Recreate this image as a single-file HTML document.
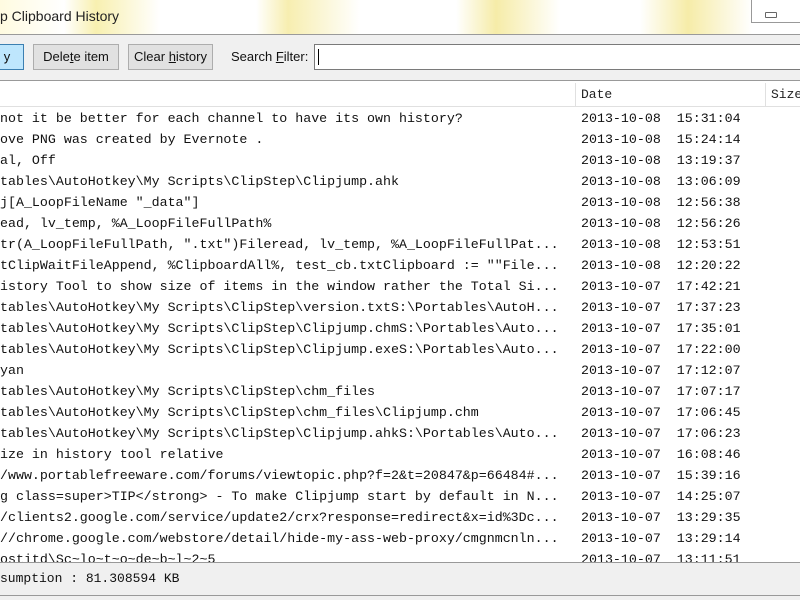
<!DOCTYPE html>
<html><head><style>
body{margin:0;width:800px;height:600px;overflow:hidden;background:#f0f0f0;font-family:"Liberation Sans",sans-serif;position:relative}
.title{position:absolute;left:0;top:0;width:800px;height:34px;background:linear-gradient(90deg,#fffbe0 0,#fff 8%,#f8f0b0 12%,#fff 20%,#fff 32%,#f7eeb0 36%,#fff 45%,#fff 57%,#f6eca8 62%,#fff 70%,#fff 80%,#f6eca8 86%,#fff 94%);border-bottom:1px solid #9a9a9a}
.title span{position:absolute;left:0;top:8px;font-size:14px;color:#222}
.minb{position:absolute;left:751px;top:0;width:60px;height:22px;border:1px solid #999;border-top:none;background:#fff}
.minb i{position:absolute;left:13px;top:12px;width:10px;height:4px;border:1px solid #666;border-radius:1px}
.btn{position:absolute;top:44px;height:24px;border:1px solid #adadad;background:#e1e1e1;font-size:13px;line-height:24px;text-align:center;color:#111}
.inp{position:absolute;left:314px;top:44px;width:490px;height:24px;border:1px solid #7a7a7a;background:#fff}
.inp i{position:absolute;left:3px;top:4px;width:1px;height:16px;background:#000}
.list{position:absolute;left:0;top:80px;width:800px;height:481px;background:#fff;border-top:1px solid #999}
.hdr{position:absolute;left:0;top:2px;width:800px;height:23px;border-bottom:1px solid #e0e0e0;font-family:"Liberation Mono",monospace;font-size:13px;color:#222}
.hdr div{position:absolute;top:0;height:23px;border-left:1px solid #e0e0e0;line-height:23px;padding-left:5px}
.row{position:absolute;left:0;height:21px;font-family:"Liberation Mono",monospace;font-size:13.3px;color:#111;white-space:pre;line-height:21px}
.d{position:absolute;left:581px}
.status{position:absolute;left:0;top:562px;width:800px;height:32px;border-top:1px solid #999;border-bottom:1px solid #999;background:#f0f0f0;font-family:"Liberation Mono",monospace;font-size:13px;line-height:32px;color:#111}
</style></head><body>
<div class="title"><span>p Clipboard History</span><div class="minb"><i></i></div></div>
<div class="btn" style="left:-10px;width:32px;background:#bee6fd;border-color:#3c7fb1">y</div>
<div class="btn" style="left:33px;width:84px">Dele<u>t</u>e item</div>
<div class="btn" style="left:128px;width:83px">Clear <u>h</u>istory</div>
<div style="position:absolute;left:231px;top:49px;font-size:13px;color:#111">Search <u>F</u>ilter:</div>
<div class="inp"><i></i></div>
<div class="list">
<div class="hdr"><div style="left:575px;width:185px">Date</div><div style="left:765px;width:40px">Size</div></div>
</div>
<div class="row" style="top:108px">not it be better for each channel to have its own history?<span class="d">2013-10-08  15:31:04</span></div>
<div class="row" style="top:129px">ove PNG was created by Evernote .<span class="d">2013-10-08  15:24:14</span></div>
<div class="row" style="top:150px">al, Off<span class="d">2013-10-08  13:19:37</span></div>
<div class="row" style="top:171px">tables\AutoHotkey\My Scripts\ClipStep\Clipjump.ahk<span class="d">2013-10-08  13:06:09</span></div>
<div class="row" style="top:192px">j[A_LoopFileName "_data"]<span class="d">2013-10-08  12:56:38</span></div>
<div class="row" style="top:213px">ead, lv_temp, %A_LoopFileFullPath%<span class="d">2013-10-08  12:56:26</span></div>
<div class="row" style="top:234px">tr(A_LoopFileFullPath, ".txt")Fileread, lv_temp, %A_LoopFileFullPat...<span class="d">2013-10-08  12:53:51</span></div>
<div class="row" style="top:255px">tClipWaitFileAppend, %ClipboardAll%, test_cb.txtClipboard := ""File...<span class="d">2013-10-08  12:20:22</span></div>
<div class="row" style="top:276px">istory Tool to show size of items in the window rather the Total Si...<span class="d">2013-10-07  17:42:21</span></div>
<div class="row" style="top:297px">tables\AutoHotkey\My Scripts\ClipStep\version.txtS:\Portables\AutoH...<span class="d">2013-10-07  17:37:23</span></div>
<div class="row" style="top:318px">tables\AutoHotkey\My Scripts\ClipStep\Clipjump.chmS:\Portables\Auto...<span class="d">2013-10-07  17:35:01</span></div>
<div class="row" style="top:339px">tables\AutoHotkey\My Scripts\ClipStep\Clipjump.exeS:\Portables\Auto...<span class="d">2013-10-07  17:22:00</span></div>
<div class="row" style="top:360px">yan<span class="d">2013-10-07  17:12:07</span></div>
<div class="row" style="top:381px">tables\AutoHotkey\My Scripts\ClipStep\chm_files<span class="d">2013-10-07  17:07:17</span></div>
<div class="row" style="top:402px">tables\AutoHotkey\My Scripts\ClipStep\chm_files\Clipjump.chm<span class="d">2013-10-07  17:06:45</span></div>
<div class="row" style="top:423px">tables\AutoHotkey\My Scripts\ClipStep\Clipjump.ahkS:\Portables\Auto...<span class="d">2013-10-07  17:06:23</span></div>
<div class="row" style="top:444px">ize in history tool relative<span class="d">2013-10-07  16:08:46</span></div>
<div class="row" style="top:465px">/www.portablefreeware.com/forums/viewtopic.php?f=2&amp;t=20847&amp;p=66484#...<span class="d">2013-10-07  15:39:16</span></div>
<div class="row" style="top:486px">g class=super&gt;TIP&lt;/strong&gt; - To make Clipjump start by default in N...<span class="d">2013-10-07  14:25:07</span></div>
<div class="row" style="top:507px">/clients2.google.com/service/update2/crx?response=redirect&amp;x=id%3Dc...<span class="d">2013-10-07  13:29:35</span></div>
<div class="row" style="top:528px">//chrome.google.com/webstore/detail/hide-my-ass-web-proxy/cmgnmcnln...<span class="d">2013-10-07  13:29:14</span></div>
<div class="row" style="top:549px">ostitd\Sc~lo~t~o~de~b~l~2~5<span class="d">2013-10-07  13:11:51</span></div>
<div class="status">sumption : 81.308594 KB</div>
</body></html>
